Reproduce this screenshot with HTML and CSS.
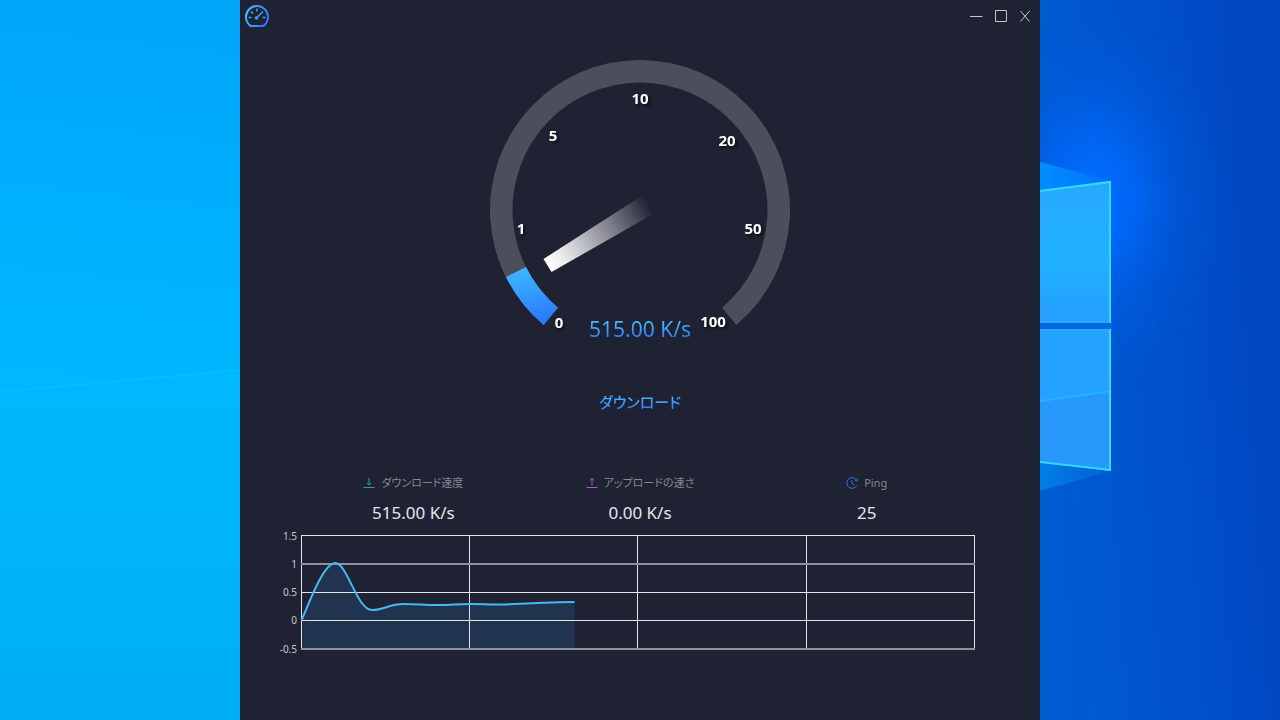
FILE: index.html
```html
<!DOCTYPE html>
<html lang="ja">
<head>
<meta charset="utf-8">
<meta name="viewport" content="width=device-width, initial-scale=1">
<title>Speed Test</title>
<link rel="stylesheet" href="styles.css">
</head>
<body>
<div class="desktop">
  <svg class="wallpaper" viewBox="0 0 1280 720" preserveAspectRatio="none" aria-hidden="true">
    <defs>
      <linearGradient id="sky" x1="0.1" y1="0" x2="0" y2="1">
        <stop offset="0" stop-color="#00a5f8"/>
        <stop offset="0.25" stop-color="#00aefe"/>
        <stop offset="0.55" stop-color="#00b9ff"/>
        <stop offset="1" stop-color="#00b8ff"/>
      </linearGradient>
      <linearGradient id="ground" gradientUnits="userSpaceOnUse" x1="0" y1="370" x2="0" y2="720">
        <stop offset="0" stop-color="#00b8ff"/>
        <stop offset="0.25" stop-color="#00b7fd"/>
        <stop offset="1" stop-color="#00aef5"/>
      </linearGradient>
      <linearGradient id="night" x1="0" y1="0.6" x2="1" y2="0.4">
        <stop offset="0" stop-color="#005dd2"/>
        <stop offset="0.5" stop-color="#0051cb"/>
        <stop offset="1" stop-color="#0046bf"/>
      </linearGradient>
      <radialGradient id="glow" gradientUnits="userSpaceOnUse" cx="0" cy="0" r="1" gradientTransform="translate(1095 200) scale(130 190)">
        <stop offset="0" stop-color="#0070ff"/>
        <stop offset="0.3" stop-color="#0069fc" stop-opacity="0.8"/>
        <stop offset="0.65" stop-color="#0060e8" stop-opacity="0.35"/>
        <stop offset="1" stop-color="#005cdd" stop-opacity="0"/>
      </radialGradient>
      <linearGradient id="paneTop" x1="0" y1="0" x2="0" y2="1">
        <stop offset="0" stop-color="#28a8ff"/>
        <stop offset="0.55" stop-color="#20b2ff"/>
        <stop offset="1" stop-color="#269dff"/>
      </linearGradient>
      <linearGradient id="beam" x1="0" y1="0" x2="1" y2="0">
        <stop offset="0" stop-color="#008fff"/>
        <stop offset="1" stop-color="#0070ff"/>
      </linearGradient>
      <linearGradient id="beamLow" x1="0" y1="0" x2="1" y2="0">
        <stop offset="0" stop-color="#007de6"/>
        <stop offset="1" stop-color="#0060d6"/>
      </linearGradient>
    </defs>
    <rect width="640" height="720" fill="url(#sky)"/>
    <path d="M0 392 240 370 640 334V720H0Z" fill="url(#ground)"/>
    <path d="M0 392 240 370" stroke="#06bdff" stroke-width="2"/>
    <rect x="1040" width="240" height="720" fill="url(#night)"/>
    <rect x="1040" width="240" height="720" fill="url(#glow)"/>
    <path d="M1040 162 1111 181 1040 192Z" fill="url(#beam)"/>
    <path d="M1040 462 1111 471 1040 491Z" fill="url(#beamLow)"/>
    <path d="M1040 320H1112V332H1040Z" fill="#0068df"/>
    <path d="M1040 191 1111 181V323H1040Z" fill="url(#paneTop)"/>
    <path d="M1040 329H1111V471L1040 462Z" fill="#25a1ff"/>
    <path d="M1040 401 1111 391V471L1040 462Z" fill="#2898fb"/>
    <path d="M1040 401 1111 391" stroke="#22b4ff" stroke-width="2"/>
    <path d="M1040 191 1110 182V323M1110 329V470L1040 462" fill="none" stroke="#2fdcff" stroke-width="2"/>
    <path d="M1040 322H1110M1040 330H1110" stroke="#2fb2ff"/>
  </svg>

  <main class="window">
    <header class="titlebar">
      <svg class="logo" viewBox="0 0 26 24" role="img" aria-label="Speed Test">
        <defs>
          <linearGradient id="logoBlue" x1="0" y1="0" x2="1" y2="0.4">
            <stop offset="0" stop-color="#4cc0ff"/>
            <stop offset="1" stop-color="#2b7cff"/>
          </linearGradient>
        </defs>
        <path d="M6 21.500A11 11 0 1 1 20 21.500Q19 22 18 22H8Q7 22 6 21.500Z" fill="none" stroke="url(#logoBlue)" stroke-width="2" stroke-linejoin="round"/>
        <path d="M4.500 13.500H7.500M18.500 13.500H21.500M7 7.500 9 9.500M13 4.500V7.500M12.500 14 19 7.500" stroke="#3fa4ff" stroke-width="1.500" fill="none"/>
        <circle cx="12.500" cy="14" r="1.800" fill="#3d9dff"/>
      </svg>
      <div class="controls">
        <button class="control" type="button" aria-label="Minimize"><svg viewBox="0 0 14 14"><path d="M0 7.500H12.500"/></svg></button>
        <button class="control" type="button" aria-label="Maximize"><svg viewBox="0 0 14 14"><path d="M1.500 1.500H12.500V12.500H1.500Z"/></svg></button>
        <button class="control" type="button" aria-label="Close"><svg viewBox="0 0 14 14"><path d="M2.500 2 11.500 12.500M11.500 2 2.500 12.500"/></svg></button>
      </div>
    </header>

    <section class="meter">
      <svg class="gauge" viewBox="0 0 300 280" role="img" aria-label="515.00 K/s">
        <defs>
          <linearGradient id="fillBlue" x1="0" y1="0" x2="0.2" y2="1">
            <stop offset="0" stop-color="#3fbcff"/>
            <stop offset="1" stop-color="#2b7cff"/>
          </linearGradient>
          <linearGradient id="needle" gradientUnits="userSpaceOnUse" x1="57" y1="206" x2="160" y2="146">
            <stop offset="0" stop-color="#fff"/>
            <stop offset="0.15" stop-color="#ececee"/>
            <stop offset="1" stop-color="#fff" stop-opacity="0"/>
          </linearGradient>
        </defs>
        <path class="track" d="M53.600 264.900A150 150 0 1 1 246.400 264.900L232 247.700A127.500 127.500 0 1 0 68 247.700Z"/>
        <path d="M16 217A150 150 0 0 0 53.600 264.900L68 247.700A127.500 127.500 0 0 1 36 207Z" fill="url(#fillBlue)"/>
        <path d="M53.500 199 153 135 165 153 61.500 212Z" fill="url(#needle)"/>
        <g class="ticks">
          <text x="69" y="268">0</text>
          <text x="31" y="174">1</text>
          <text x="63" y="81">5</text>
          <text x="150" y="44">10</text>
          <text x="237" y="86">20</text>
          <text x="263" y="174">50</text>
          <text x="223" y="267">100</text>
        </g>
      </svg>
      <output class="reading">515.00 K/s</output>
      <p class="phase">ダウンロード</p>
    </section>

    <dl class="stats">
      <div class="stat">
        <dt>
          <svg class="icon down" viewBox="0 0 12 12" aria-hidden="true"><path d="M.5 10.500H11.500M6 1V8M4 6 6 8 8 6"/></svg>
          <span>ダウンロード速度</span>
        </dt>
        <dd>515.00 K/s</dd>
      </div>
      <div class="stat">
        <dt>
          <svg class="icon up" viewBox="0 0 12 12" aria-hidden="true"><path d="M.5 10.500H11.500M6 8.500V1.500M4 3.500 6 1.500 8 3.500"/></svg>
          <span>アップロードの速さ</span>
        </dt>
        <dd>0.00 K/s</dd>
      </div>
      <div class="stat">
        <dt>
          <svg class="icon ping" viewBox="0 0 12 12" aria-hidden="true"><path d="M10.800 8.500A5.300 5.300 0 1 1 10.300 2.700M11.300 1.500V3.800H9M6 3V6.500L8 8"/></svg>
          <span>Ping</span>
        </dt>
        <dd>25</dd>
      </div>
    </dl>

    <svg class="chart" viewBox="0 0 698 124" role="img" aria-label="Speed history">
      <g class="axis">
        <text x="19" y="12">1.5</text>
        <text x="19" y="40">1</text>
        <text x="19" y="68">0.5</text>
        <text x="19" y="96">0</text>
        <text x="19" y="125">-0.5</text>
      </g>
      <path class="area" d="M23.500 92.500C33 70 46 35 57.500 35C69 35 79 82 94 82C105 82 112 76 125 76C139 76 146 77 160 77C173 77 179 76 192 76C206 76 213 77 226 76.500C247 75.500 271 74.500 296.500 74V121H23.500Z"/>
      <path class="grid" d="M23.500 7.500H696.500M23.500 92.500H696.500M23.500 64.500H696.500M23.500 7V121.500M191.500 7V121.500M359.500 7V121.500M528.500 7V121.500M696.500 7V121.500"/>
      <path class="grid soft" d="M23 36H697M23 121H697"/>
      <path class="line" d="M23.500 92.500C33 70 46 35 57.500 35C69 35 79 82 94 82C105 82 112 76 125 76C139 76 146 77 160 77C173 77 179 76 192 76C206 76 213 77 226 76.500C247 75.500 271 74.500 296.500 74"/>
    </svg>
  </main>
</div>
</body>
</html>
```
FILE: styles.css
```css
* {
  box-sizing: border-box;
}

body {
  margin: 0;
  font-family: "Noto Sans", "Noto Sans CJK JP", sans-serif;
}

.desktop {
  position: relative;
  display: flex;
  justify-content: center;
  min-height: 100vh;
  background: #005cd6;
}

.wallpaper {
  position: absolute;
  inset: 0;
  width: 100%;
  height: 100%;
}

.window {
  position: relative;
  display: flex;
  flex-direction: column;
  width: 100%;
  max-width: 800px;
  background: #1f2233;
  color: #e4e5ea;
}

.titlebar {
  display: flex;
  align-items: center;
  justify-content: space-between;
  height: 32px;
  padding: 0 8px 0 4px;
}

.logo {
  width: 26px;
  height: 24px;
}

.controls {
  display: flex;
  gap: 10px;
}

.control {
  display: flex;
  width: 14px;
  height: 14px;
  padding: 0;
  border: 0;
  background: none;
}

.control path {
  fill: none;
  stroke: #c4c6cf;
}

.meter {
  display: flex;
  flex-direction: column;
  align-items: center;
  padding-top: 28px;
}

.gauge {
  width: 300px;
  max-width: 100%;
  height: 280px;
}

.track {
  fill: #4b4f5b;
}

.ticks {
  fill: #fff;
  font-family: "Open Sans", sans-serif;
  font-size: 15px;
  font-weight: 700;
  text-anchor: middle;
  filter: drop-shadow(2px 2px 1px #0d0e16);
}

.reading,
.phase {
  margin: 0;
  background: linear-gradient(#4cc3ff 20%, #2b7cff 80%);
  background-clip: text;
  color: transparent;
}

.reading {
  margin-top: -26px;
  font-size: 21px;
  line-height: 30px;
}

.phase {
  margin-top: 46px;
  font-size: 15px;
  line-height: 24px;
  font-weight: 500;
  font-feature-settings: "palt";
}

.stats {
  display: grid;
  grid-template-columns: repeat(3, 1fr);
  margin: 60px 60px 0;
  text-align: center;
}

.stat dt {
  display: flex;
  align-items: center;
  justify-content: center;
  gap: 6px;
  color: #85878f;
  font-size: 11px;
  line-height: 18px;
  font-feature-settings: "palt";
}

.stat dd {
  margin: 8px 0 0;
  font-size: 17px;
  line-height: 26px;
}

.icon {
  width: 12px;
  height: 12px;
  fill: none;
}

.down {
  stroke: #1fa88c;
}

.up {
  stroke: #c04fdb;
}

.ping {
  stroke: #2f78e8;
}

.chart {
  margin: 2px 64px 0 38px;
  overflow: visible;
}

.axis {
  fill: #c6c7cd;
  font-size: 10px;
  text-anchor: end;
}

.area {
  fill: #20344f;
}

.grid {
  fill: none;
  stroke: #e2e4ea;
}

.soft {
  stroke: #8e909b;
  stroke-width: 2px;
}

.line {
  fill: none;
  stroke: #45b8f5;
  stroke-width: 2px;
}
```
